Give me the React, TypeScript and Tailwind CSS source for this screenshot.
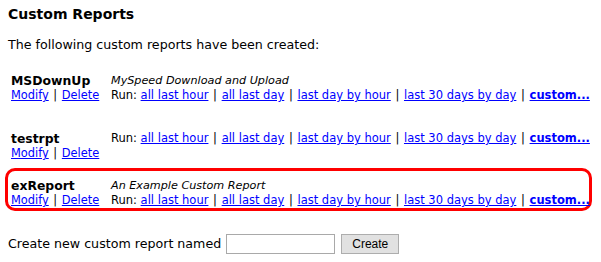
import React from "react";

const L = ({ children, bold }: { children: React.ReactNode; bold?: boolean }) => (
  <a className={"text-[#0000ff] underline" + (bold ? " font-bold" : "")} href="#">
    {children}
  </a>
);

const S = () => <span className="px-[1px]"> | </span>;

const Row = ({ name, desc, highlight }: { name: string; desc?: string; highlight?: boolean }) => (
  <div
    className={
      "flex w-[587px] rounded-[10px] border-[3px] px-[3px] pt-[7px] pb-0 text-[11.2px] leading-[15px] " +
      (highlight ? "border-[#ff0000]" : "border-transparent")
    }
  >
    <div className="w-[100px] shrink-0">
      <div className="font-bold text-[12.4px]">{name}</div>
      <div className="whitespace-nowrap text-[11.4px]">
        <L>Modify</L>
        <span className="px-[1px]"> | </span>
        <L>Delete</L>
      </div>
    </div>
    <div className="min-w-0">
      {desc && <div className="italic whitespace-nowrap">{desc}</div>}
      <div className="whitespace-nowrap text-[11.5px]">
        Run: <L>all last hour</L>
        <S />
        <L>all last day</L>
        <S />
        <L>last day by hour</L>
        <S />
        <L>last 30 days by day</L>
        <S />
        <L bold>custom...</L>
      </div>
    </div>
  </div>
);

export default function App() {
  return (
    <div
      className="w-[601px] h-[262px] overflow-hidden bg-white text-black px-[5px]"
      style={{ fontFamily: '"DejaVu Sans", Verdana, sans-serif' }}
    >
      <div className="pl-[3px] pt-[5px] font-bold text-[14px] leading-[18px]">Custom Reports</div>
      <div className="pl-[3px] mt-[14px] text-[12.65px] leading-[15px]">
        The following custom reports have been created:
      </div>
      <div className="mt-[11px] flex flex-col">
        <div className="mb-[15px]">
          <Row name="MSDownUp" desc="MySpeed Download and Upload" />
        </div>
        <div className="mb-[4px]">
          <Row name="testrpt" />
        </div>
        <Row name="exReport" desc="An Example Custom Report" highlight />
      </div>
      <div className="pl-[3px] mt-[23px] flex items-center text-[12.65px]">
        <span className="whitespace-nowrap">Create new custom report named</span>
        <input
          className="ml-[5px] w-[109px] h-[20px] border border-[#a9a9a9] bg-white"
          type="text"
        />
        <button
          className="ml-[6px] h-[20px] w-[58px] border border-[#adadad] bg-[#e1e1e1] text-[12px] leading-none"
          style={{ fontFamily: '"Liberation Sans", Arial, sans-serif' }}
        >
          Create
        </button>
      </div>
    </div>
  );
}
